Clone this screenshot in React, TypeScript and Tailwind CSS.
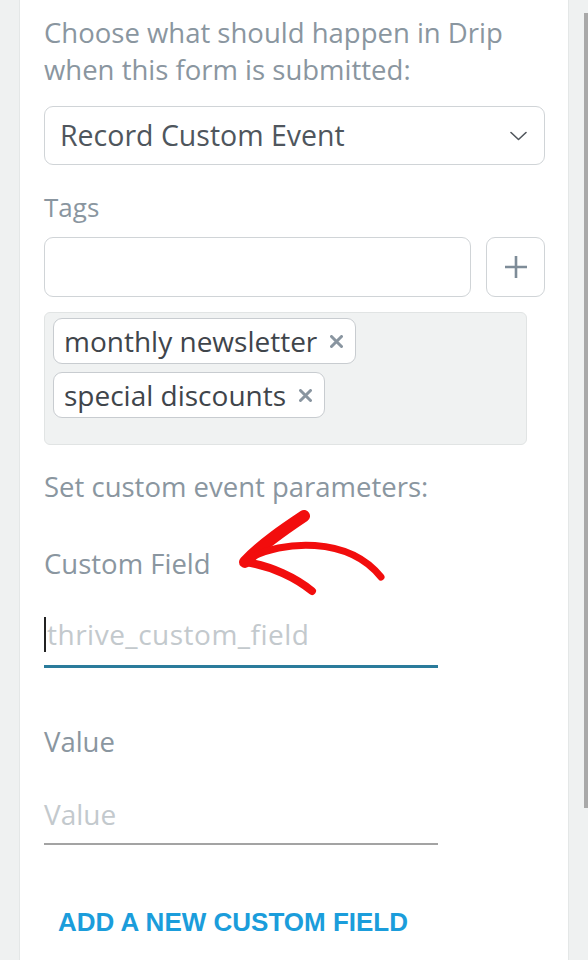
const TAGS = ["monthly newsletter", "special discounts"];

function RedArrow() {
  return (
    <svg
      className="pointer-events-none absolute left-[230px] top-[500px]"
      width="170"
      height="100"
      viewBox="230 500 170 100"
      fill="none"
      stroke="#f20d0d"
      strokeLinecap="round"
      strokeLinejoin="round"
    >
      <path d="M304 516 C286 528 262 544 245 562" strokeWidth="12" />
      <path d="M248 559 C282 540 348 536 381 577" strokeWidth="7" />
      <path d="M245 562 C272 566 296 578 312 591" strokeWidth="8" />
    </svg>
  );
}

export default function App() {
  return (
    <div className="relative flex h-[960px] w-[588px] overflow-hidden bg-[#eff1f1] font-['Open_Sans',sans-serif]">
      <div className="w-[20px] shrink-0 border-r border-[#e4e7e7]" />

      <div className="flex w-[548px] shrink-0 flex-col bg-white pl-[24px] pr-[23px]">
        <p className="mt-[14px] text-[27.5px] leading-[37px] text-[#8a96a0]">
          Choose what should happen in Drip when this form is submitted:
        </p>

        <div className="mt-[18px] flex h-[59px] w-[501px] items-center justify-between rounded-[9px] border-[1.5px] border-[#d0d4d7] pl-[15px] pr-[17px]">
          <span className="text-[28.5px] text-[#4f565d]">Record Custom Event</span>
          <svg width="17" height="10" viewBox="0 0 17 10" fill="none" stroke="#50565c" strokeWidth="1.6" strokeLinecap="round" strokeLinejoin="round">
            <path d="M1 1.5 L8.5 8.5 L16 1.5" />
          </svg>
        </div>

        <div className="mt-[26px] text-[26px] leading-[32px] text-[#8a96a0]">Tags</div>

        <div className="mt-[14px] flex gap-[15px]">
          <div className="h-[60px] w-[428px] rounded-[9px] border-[1.5px] border-[#d0d4d7]" />
          <button className="flex h-[60px] w-[59px] items-center justify-center rounded-[9px] border-[1.5px] border-[#d0d4d7]">
            <svg width="22" height="22" viewBox="0 0 22 22" stroke="#7e8c98" strokeWidth="2.6">
              <path d="M11 0 V22 M0 11 H22" />
            </svg>
          </button>
        </div>

        <div className="mt-[15px] flex h-[133px] w-[483px] flex-col items-start gap-[8px] rounded-[6px] border border-[#e1e4e4] bg-[#f0f2f2] pl-[8px] pt-[5px]">
          {TAGS.map((tag) => (
            <div
              key={tag}
              className="flex h-[46px] items-center gap-[13px] rounded-[9px] border-[1.5px] border-[#c8ccd0] bg-white pl-[10px] pr-[12px]"
            >
              <span className="text-[28px] text-[#3f454b]">{tag}</span>
              <svg width="13" height="13" viewBox="0 0 13 13" stroke="#8995a0" strokeWidth="3" strokeLinecap="round">
                <path d="M1.5 1.5 L11.5 11.5 M11.5 1.5 L1.5 11.5" />
              </svg>
            </div>
          ))}
        </div>

        <p className="mt-[23px] text-[27.5px] leading-[37px] text-[#8a96a0]">Set custom event parameters:</p>

        <div className="mt-[40px] text-[27.5px] leading-[37px] text-[#8a96a0]">Custom Field</div>

        <div className="mt-[29px] flex h-[57px] w-[394px] items-center border-b-[3px] border-[#2a7b9b] pb-[8px]">
          <span className="h-[35px] w-[2px] bg-[#222]" />
          <span className="ml-[1px] text-[28px] tracking-[0.5px] text-[#c3c9cd]">thrive_custom_field</span>
        </div>

        <div className="mt-[55px] text-[27.5px] leading-[37px] text-[#8a96a0]">Value</div>

        <div className="mt-[29px] flex h-[56px] w-[394px] items-center border-b-2 border-[#a3a3a3] pb-[4px]">
          <span className="text-[28px] text-[#c3c9cd]">Value</span>
        </div>

        <button className="mt-[61px] self-start pl-[14px] font-['Liberation_Sans',sans-serif] text-[26px] font-bold leading-[32px] text-[#1b9ddb]">
          ADD A NEW CUSTOM FIELD
        </button>
      </div>

      <div className="w-[16px] shrink-0 border-l border-[#e4e7e7]" />
      <div className="flex w-[4px] shrink-0 flex-col">
        <div className="mt-[13px] h-[795px] bg-[#a9a9a9]" />
      </div>

      <RedArrow />
    </div>
  );
}
